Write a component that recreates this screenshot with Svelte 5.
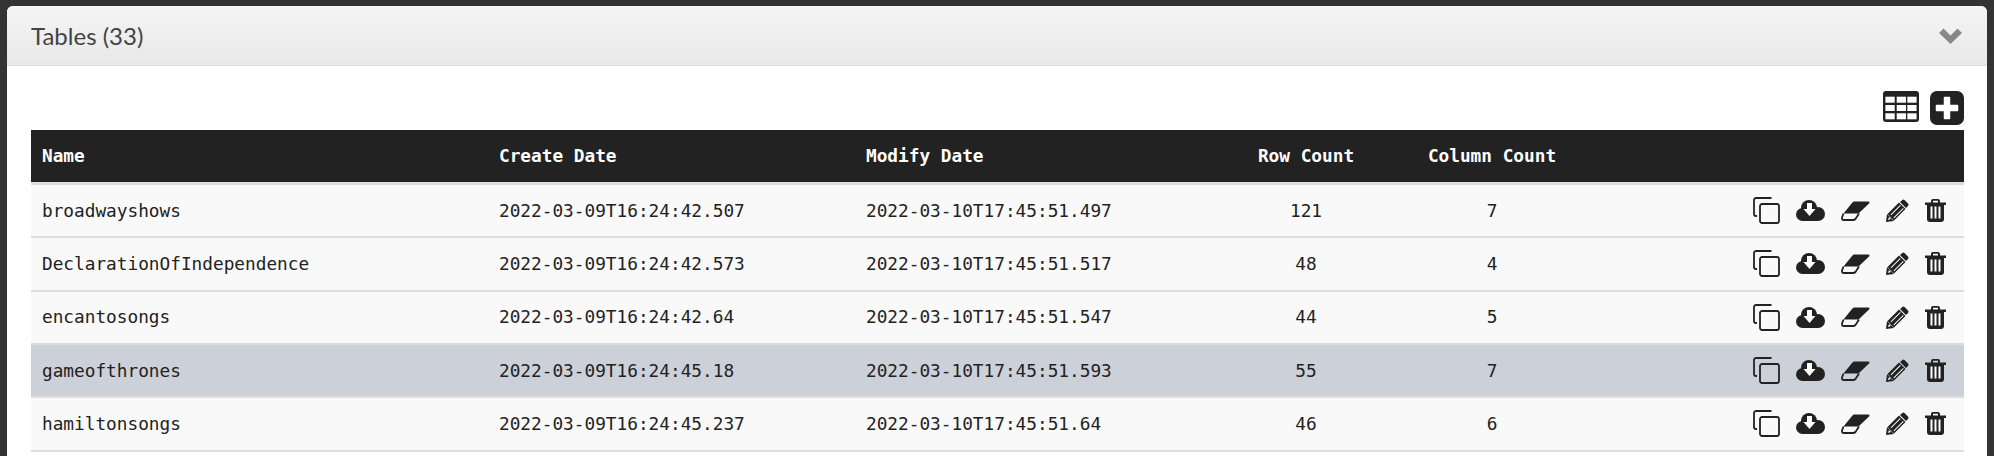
<script>
const rows = [
  { name: "broadwayshows", created: "2022-03-09T16:24:42.507", modified: "2022-03-10T17:45:51.497", count: 121, cols: 7 },
  { name: "DeclarationOfIndependence", created: "2022-03-09T16:24:42.573", modified: "2022-03-10T17:45:51.517", count: 48, cols: 4 },
  { name: "encantosongs", created: "2022-03-09T16:24:42.64", modified: "2022-03-10T17:45:51.547", count: 44, cols: 5 },
  { name: "gameofthrones", created: "2022-03-09T16:24:45.18", modified: "2022-03-10T17:45:51.593", count: 55, cols: 7, selected: true },
  { name: "hamiltonsongs", created: "2022-03-09T16:24:45.237", modified: "2022-03-10T17:45:51.64", count: 46, cols: 6 }
];
</script>

<div class="panel">
  <div class="heading">
    <span class="title">Tables (33)</span>
    <svg class="chevron" width="23" height="16" viewBox="0 0 23 16"><path d="M0 5 L4.500 0.500 L11.500 7.500 L18.500 0.500 L23 5 L11.500 16 Z" fill="#888"/></svg>
  </div>
  <div class="body">
    <div class="tools">
      <svg width="36" height="31" viewBox="0 0 36 31">
        <rect width="36" height="31" rx="3" fill="#222"/>
        <g fill="#fff">
          {#each [5.7, 14, 22.3] as y}
            {#each [2.4, 13.7, 24.3] as x}
              <rect {x} {y} width="9.300" height="6"/>
            {/each}
          {/each}
        </g>
      </svg>
      <svg width="34" height="34" viewBox="0 0 34 34">
        <rect width="34" height="34" rx="7" fill="#222"/>
        <path d="M14.500 6.500h5v8h8v5h-8v8h-5v-8h-8v-5h8z" fill="#fff" stroke="#fff" stroke-width="1.500" stroke-linejoin="round"/>
      </svg>
    </div>
    <table>
      <thead>
        <tr>
          <th class="c-name">Name</th>
          <th class="c-date">Create Date</th>
          <th class="c-date">Modify Date</th>
          <th class="c-num">Row Count</th>
          <th class="c-col">Column Count</th>
          <th></th>
        </tr>
      </thead>
      <tbody>
        {#each rows as r}
          <tr class:selected={r.selected}>
            <td>{r.name}</td>
            <td>{r.created}</td>
            <td>{r.modified}</td>
            <td class="center">{r.count}</td>
            <td class="center">{r.cols}</td>
            <td class="actions">
              <div class="icons">
                <svg width="27" height="27" viewBox="0 0 27 27" fill="none" stroke="#222" stroke-width="1.800">
                  <path d="M18.500 1H3a2 2 0 0 0-2 2v14a2 2 0 0 0 2 2h1"/>
                  <rect x="7" y="7" width="19" height="19" rx="2"/>
                </svg>
                <svg width="29" height="21" viewBox="0 0 29 21">
                  <g fill="#222">
                    <circle cx="6.500" cy="14.500" r="6.500"/>
                    <circle cx="13" cy="8" r="8"/>
                    <circle cx="22" cy="14" r="7"/>
                    <rect x="6" y="12" width="16" height="9"/>
                  </g>
                  <path fill="#fff" d="M11 3h5v6h3.500L13.500 16 7.500 9H11z"/>
                </svg>
                <svg width="29" height="20" viewBox="0 0 29 20">
                  <path fill="#222" d="M13 0.500H27Q29.500 0.500 28 2.500L17.500 12.500H2.500L11 2Q12 0.500 13 0.500z"/>
                  <path fill="none" stroke="#222" stroke-width="1.800" d="M2.500 12.500L1.200 16Q0.300 19 3 19H12Q13.500 19 14.500 18L18 12.500"/>
                </svg>
                <svg width="23" height="23" viewBox="0 0 23 23">
                  <path fill="#222" d="M17 0.500a2 2 0 0 1 1.500.5l3.500 3.500a2 2 0 0 1 0 2.500l-2 2-6-6zM13 3.500l6.500 6.500L8 21.500 1.500 15z"/>
                  <path fill="#fff" d="M4.500 15.500L14 6l.7.700L5.200 16.200zM7.500 18.500L17 9l.7.700L8.200 19.200z"/>
                  <path fill="#222" d="M1 15l7 7L0 23z"/>
                  <path fill="#fff" d="M3 18l2 2-3 1z"/>
                </svg>
                <svg width="21" height="23" viewBox="0 0 21 23">
                  <path fill="#222" d="M6 3.500V2a2 2 0 0 1 2-2h5a2 2 0 0 1 2 2v1.500h6V6h-2v14a3 3 0 0 1-3 3H5a3 3 0 0 1-3-3V6H0V3.500zM8 3.500h5V1.800H8z"/>
                  <path fill="#fff" d="M5.500 7.500h2v12h-2zM9.500 7.500h2v12h-2zM13.500 7.500h2v12h-2z"/>
                </svg>
              </div>
            </td>
          </tr>
        {/each}
      </tbody>
    </table>
  </div>
</div>

<style>
:global(body) {
  background: #333;
  margin: 0;
}
.panel {
  margin: 6px 7px 0;
  background: #fff;
  border-radius: 6px 6px 0 0;
  height: 450px;
  overflow: hidden;
}
.heading {
  height: 60px;
  box-sizing: border-box;
  border-bottom: 1px solid #ddd;
  background: linear-gradient(to bottom, #f5f5f5, #e8e8e8);
  display: flex;
  align-items: center;
  justify-content: space-between;
  padding: 0 25px 0 24px;
}
.title {
  font-family: "Lato", sans-serif;
  font-size: 24px;
  font-weight: 400;
  color: #444;
}
.body {
  padding: 0 23px 0 24px;
}
.tools {
  display: flex;
  justify-content: flex-end;
  align-items: flex-start;
  gap: 11px;
  height: 64px;
  padding-top: 25px;
  box-sizing: border-box;
}
table {
  width: 100%;
  border-collapse: separate;
  border-spacing: 0;
  table-layout: fixed;
  font-family: "DejaVu Sans Mono", monospace;
  font-size: 17.75px;
  color: #222;
}
thead tr {
  background: #222;
}
th {
  color: #fff;
  font-weight: bold;
  text-align: left;
  height: 55px;
  box-sizing: border-box;
  padding: 0 11px;
  border-bottom: 3px solid #ddd;
}
.c-name { width: 457px; }
.c-date { width: 367px; }
th.c-num { width: 168px; text-align: center; }
th.c-col { width: 204px; text-align: center; }
td {
  height: 53.33px;
  box-sizing: border-box;
  padding: 0 11px;
  background: #f9f9f9;
  border-bottom: 2px solid #ddd;
}
tr.selected td {
  background: #ccd0d8;
}
.center {
  text-align: center;
}
td.actions {
  padding-right: 18px;
}
.icons {
  display: flex;
  justify-content: flex-end;
  align-items: center;
  gap: 16px;
}
.icons svg {
  display: block;
}
</style>
